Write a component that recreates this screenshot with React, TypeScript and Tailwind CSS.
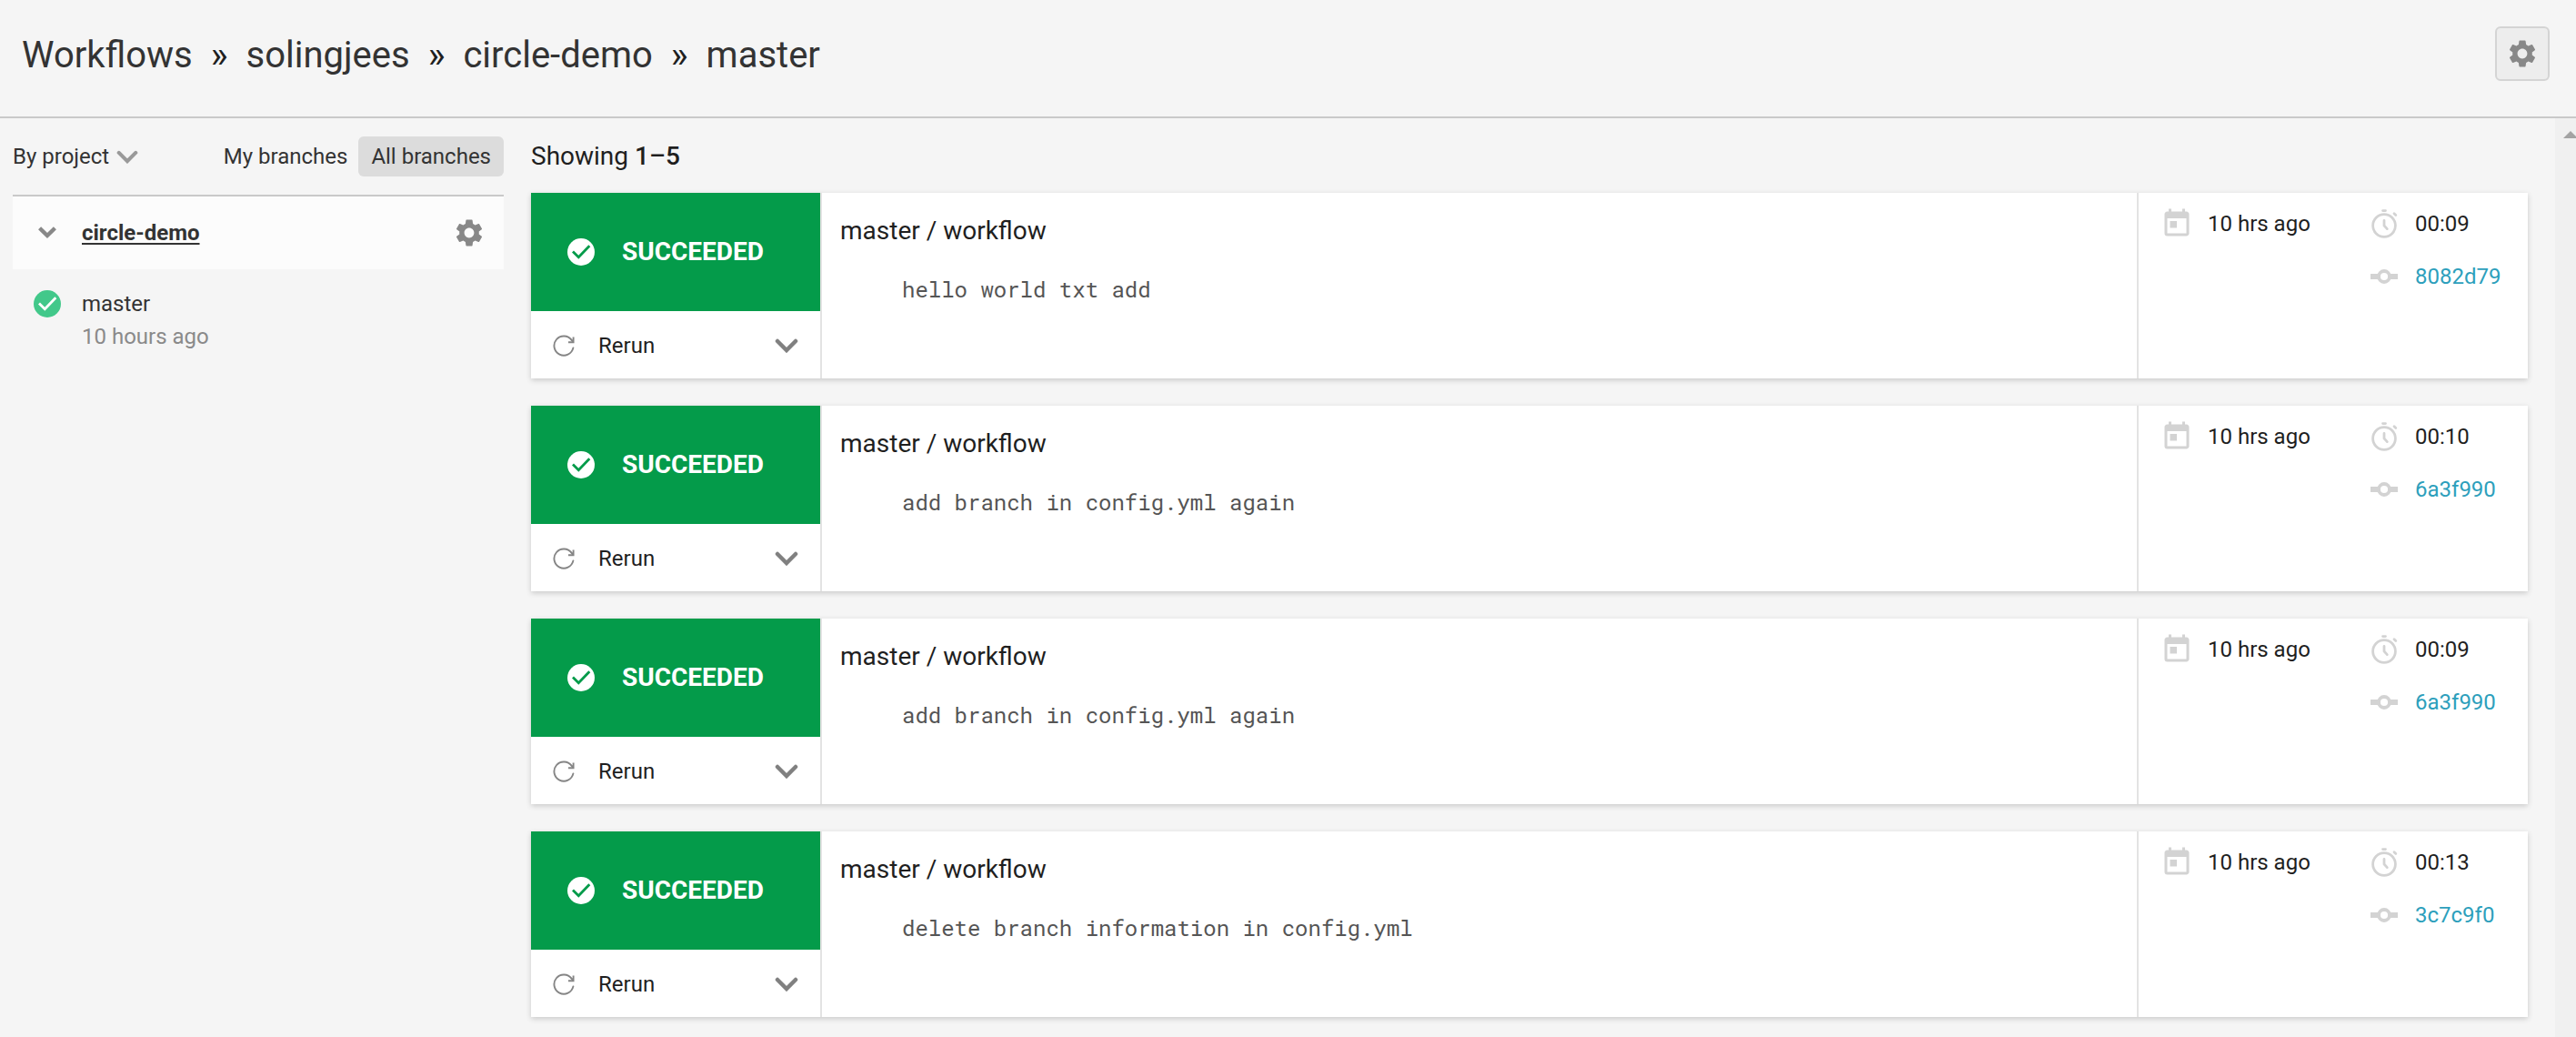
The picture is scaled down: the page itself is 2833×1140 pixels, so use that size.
import React from "react";
import { MdSettings, MdToday } from "react-icons/md";

type Run = { message: string; started: string; duration: string; commit: string };

const runs: Run[] = [
  { message: "hello world txt add", started: "10 hrs ago", duration: "00:09", commit: "8082d79" },
  { message: "add branch in config.yml again", started: "10 hrs ago", duration: "00:10", commit: "6a3f990" },
  { message: "add branch in config.yml again", started: "10 hrs ago", duration: "00:09", commit: "6a3f990" },
  { message: "delete branch information in config.yml", started: "10 hrs ago", duration: "00:13", commit: "3c7c9f0" },
];

const crumbs = ["Workflows", "solingjees", "circle-demo", "master"];

function Chevron({ className }: { className: string }) {
  return (
    <svg viewBox="0 0 26 16" className={className} fill="none" stroke="currentColor" strokeWidth="4.5" strokeLinecap="round" aria-hidden="true">
      <path d="M3 3l10 10L23 3" />
    </svg>
  );
}

function CheckCircle({ className, check }: { className: string; check: string }) {
  return (
    <svg viewBox="0 0 30 30" className={className} aria-hidden="true">
      <circle cx="15" cy="15" r="15" fill="currentColor" />
      <path d="M6 14.5l6.3 6.3L24.3 8.2" fill="none" stroke={check} strokeWidth="2.8" />
    </svg>
  );
}

function RerunIcon() {
  return (
    <svg viewBox="0 0 24 24" className="size-6 text-[#858585]" fill="none" stroke="currentColor" strokeWidth="1.9" aria-hidden="true">
      <path d="M22.4 14.4A10.6 10.6 0 1 1 20.6 5.8" strokeLinecap="round" />
      <path d="M22.6 2.6v5.6h-5.6" />
      <path d="M20 5.2l2.4 2.4" />
    </svg>
  );
}

function StopwatchIcon() {
  return (
    <svg viewBox="0 0 36 36" className="size-9 text-[#d3d3d3]" fill="none" stroke="currentColor" strokeWidth="2.8" strokeLinecap="round" aria-hidden="true">
      <circle cx="18" cy="20" r="12.4" />
      <path d="M16.5 3.6h3M29 6.8l1.8 1.8M18 14.4V20l3.3 3.6" />
    </svg>
  );
}

function CommitIcon() {
  return (
    <svg viewBox="0 0 36 36" className="size-9 text-[#d3d3d3]" aria-hidden="true">
      <path d="M3 15h30v6H3z" fill="currentColor" />
      <circle cx="18" cy="18" r="6" fill="#fff" stroke="currentColor" strokeWidth="3.8" />
    </svg>
  );
}

function RunCard({ run }: { run: Run }) {
  return (
    <article className="flex bg-white shadow-[0_2px_6px_rgba(0,0,0,0.18)]">
      <div className="w-80 shrink-0 border-r-2 border-[#e3e3e3]">
        <a href="#workflow" className="flex h-[130px] items-center gap-[30px] bg-[#049b4a] pl-10 text-[28px] font-bold text-white">
          <CheckCircle className="size-[30px]" check="#049b4a" />
          SUCCEEDED
        </a>
        <button type="button" className="flex h-[74px] w-full items-center pt-0.5 pr-6 pl-6 text-2xl">
          <RerunIcon />
          <span className="ml-[26px]">Rerun</span>
          <Chevron className="ml-auto h-4 w-[26px] text-[#808080]" />
        </button>
      </div>
      <div className="min-w-0 flex-1 px-5 pt-6">
        <h2 className="text-[28px] leading-9">master / workflow</h2>
        <p className="mt-7 pl-[68px] font-['Roboto_Mono','Liberation_Mono',monospace] text-2xl leading-9 text-[#555]">{run.message}</p>
      </div>
      <div className="flex w-[430px] shrink-0 border-l-2 border-[#e3e3e3] pt-4 pl-6 text-2xl">
        <div className="flex h-9 w-[228px] items-center gap-4">
          <MdToday className="size-9 text-[#d3d3d3]" aria-hidden="true" />
          {run.started}
        </div>
        <div className="flex flex-col gap-[22px]">
          <div className="flex h-9 items-center gap-4">
            <StopwatchIcon />
            {run.duration}
          </div>
          <div className="flex h-9 items-center gap-4">
            <CommitIcon />
            <a href="#commit" className="text-[#2d9fbc]">{run.commit}</a>
          </div>
        </div>
      </div>
    </article>
  );
}

export default function App() {
  return (
    <div className="flex h-screen flex-col overflow-hidden bg-[#f5f5f5] font-['Roboto',sans-serif] text-[#1f1f1f]">
      <header className="flex h-[130px] shrink-0 items-start justify-between border-b-2 border-[#c9c9c9] pt-[29px] pr-[29px] pl-6">
        <nav aria-label="Breadcrumb" className="flex gap-5 text-[40px] leading-[64px]">
          {crumbs.map((name, i) => (
            <React.Fragment key={name}>
              {i > 0 && <span>»</span>}
              <a href={`#${name}`} className="text-[#333]">{name}</a>
            </React.Fragment>
          ))}
        </nav>
        <button type="button" aria-label="Settings" className="flex size-[60px] items-center justify-center rounded-md border-2 border-[#d4d4d4] bg-[#ededed] text-[#888]">
          <MdSettings className="size-9" />
        </button>
      </header>
      <div className="flex min-h-0 flex-1">
        <aside className="w-[554px] shrink-0 pt-5 pl-3.5 text-2xl text-[#333]">
          <div className="flex h-11 items-center">
            <button type="button" className="flex items-center gap-2">
              By project
              <Chevron className="h-[15px] w-6 text-[#999]" />
            </button>
            <button type="button" className="mr-3 ml-auto">My branches</button>
            <button type="button" className="h-11 rounded-md bg-[#dcdcdc] px-3.5">All branches</button>
          </div>
          <div className="mt-5 flex h-[82px] items-center border-t-2 border-[#c9c9c9] bg-[#fcfcfc] pr-5 pl-[26px]">
            <button type="button" aria-label="Collapse circle-demo" className="mr-[26px] text-[#888]">
              <svg viewBox="0 0 24 16" className="h-4 w-6" fill="none" stroke="currentColor" strokeWidth="4.4" aria-hidden="true">
                <path d="M3.6 2.8L12 11l8.4-8.2" />
              </svg>
            </button>
            <a href="#circle-demo" className="font-bold underline decoration-2 underline-offset-3">circle-demo</a>
            <button type="button" aria-label="Project settings" className="ml-auto text-[#888]">
              <MdSettings className="size-9" />
            </button>
          </div>
          <a href="#master" className="mt-5 flex gap-[23px] pl-[23px] leading-9">
            <CheckCircle className="mt-[3px] size-[30px] text-[#42c88a]" check="#fff" />
            <span>
              <span className="block">master</span>
              <span className="block text-[#8a8a8a]">10 hours ago</span>
            </span>
          </a>
        </aside>
        <main className="min-w-0 flex-1 overflow-hidden pr-[30px] pl-[30px]">
          <p className="flex h-[82px] items-center pt-0.5 text-[28px] whitespace-pre">
            Showing <strong className="font-medium">1–5</strong>
          </p>
          <div className="flex flex-col gap-[30px]">
            {runs.map((run, i) => (
              <RunCard key={i} run={run} />
            ))}
          </div>
        </main>
        <div className="w-[23px] shrink-0 overflow-hidden bg-[#f0f0f0] pt-3.5 pl-[9px]" aria-hidden="true">
          <svg viewBox="0 0 16 8" className="h-2 w-4 max-w-none text-[#a3a3a3]">
            <path d="M0 8L8 0l8 8z" fill="currentColor" />
          </svg>
        </div>
      </div>
    </div>
  );
}
